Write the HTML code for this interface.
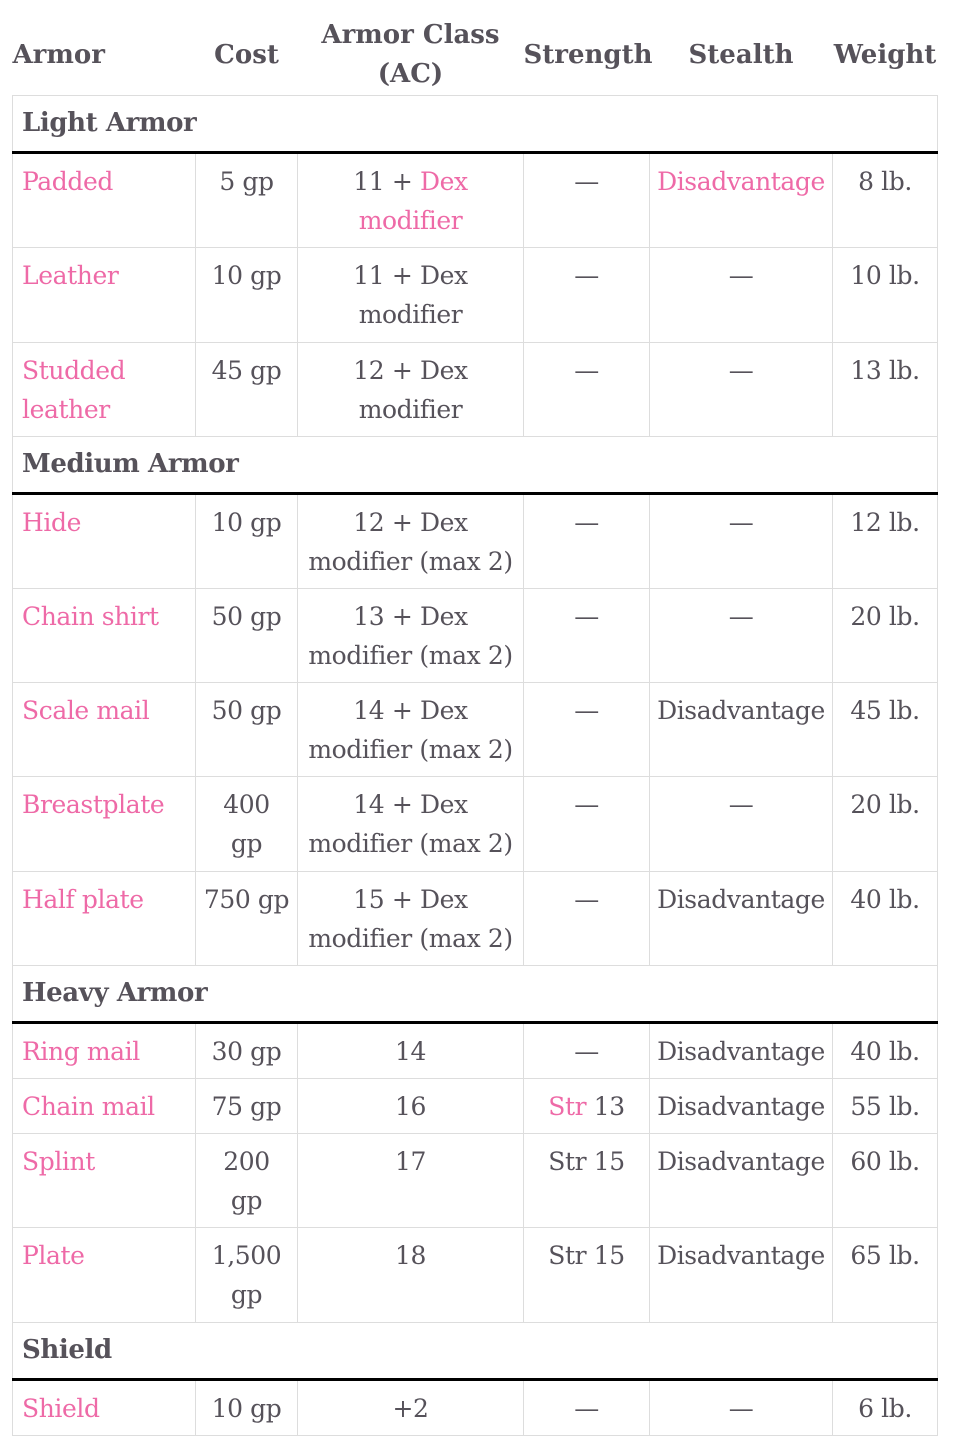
<!DOCTYPE html>
<html><head><meta charset="utf-8"><style>
body{margin:0;background:#fff;width:966px;height:1453px;overflow:hidden}
table{position:absolute;left:12px;top:0;border-collapse:collapse;table-layout:fixed;width:925px;font-family:"DejaVu Serif","Liberation Serif",serif;font-size:25px;color:#56525a;line-height:39px}
td,th{padding:0 4px;vertical-align:top;text-align:center;border:1px solid #ddd;padding-top:8px;box-sizing:border-box;letter-spacing:-0.4px;white-space:nowrap;overflow:visible}
th{border:none;vertical-align:middle;padding:16px 0 0 0;font-weight:bold;font-size:26px;letter-spacing:0}
td:first-child{text-align:left;padding-left:9px}
th:first-child{text-align:left}
.p{color:#ee6aa7}
.g td{font-weight:bold;text-align:left;font-size:26px;border-bottom:3px solid #000;padding-top:8px}
</style></head><body>
<table>
<colgroup><col style="width:183px"><col style="width:102px"><col style="width:226px"><col style="width:126px"><col style="width:183px"><col style="width:105px"></colgroup>
<tr style="height:95px"><th>Armor</th><th>Cost</th><th>Armor Class<br>(AC)</th><th>Strength</th><th>Stealth</th><th>Weight</th></tr>
<tr class="g" style="height:57px"><td colspan="6">Light Armor</td></tr>
<tr style="height:95px"><td class="p">Padded</td><td>5 gp</td><td>11 + <span class="p">Dex<br>modifier</span></td><td>—</td><td class="p">Disadvantage</td><td>8 lb.</td></tr>
<tr style="height:95px"><td class="p">Leather</td><td>10 gp</td><td>11 + Dex<br>modifier</td><td>—</td><td>—</td><td>10 lb.</td></tr>
<tr style="height:94px"><td class="p">Studded<br>leather</td><td>45 gp</td><td>12 + Dex<br>modifier</td><td>—</td><td>—</td><td>13 lb.</td></tr>
<tr class="g" style="height:57px"><td colspan="6">Medium Armor</td></tr>
<tr style="height:95px"><td class="p">Hide</td><td>10 gp</td><td>12 + Dex<br>modifier (max 2)</td><td>—</td><td>—</td><td>12 lb.</td></tr>
<tr style="height:94px"><td class="p">Chain shirt</td><td>50 gp</td><td>13 + Dex<br>modifier (max 2)</td><td>—</td><td>—</td><td>20 lb.</td></tr>
<tr style="height:94px"><td class="p">Scale mail</td><td>50 gp</td><td>14 + Dex<br>modifier (max 2)</td><td>—</td><td>Disadvantage</td><td>45 lb.</td></tr>
<tr style="height:95px"><td class="p">Breastplate</td><td>400<br>gp</td><td>14 + Dex<br>modifier (max 2)</td><td>—</td><td>—</td><td>20 lb.</td></tr>
<tr style="height:94px"><td class="p">Half plate</td><td>750 gp</td><td>15 + Dex<br>modifier (max 2)</td><td>—</td><td>Disadvantage</td><td>40 lb.</td></tr>
<tr class="g" style="height:57px"><td colspan="6">Heavy Armor</td></tr>
<tr style="height:56px"><td class="p">Ring mail</td><td>30 gp</td><td>14</td><td>—</td><td>Disadvantage</td><td>40 lb.</td></tr>
<tr style="height:55px"><td class="p">Chain mail</td><td>75 gp</td><td>16</td><td><span class="p">Str</span> 13</td><td>Disadvantage</td><td>55 lb.</td></tr>
<tr style="height:94px"><td class="p">Splint</td><td>200<br>gp</td><td>17</td><td>Str 15</td><td>Disadvantage</td><td>60 lb.</td></tr>
<tr style="height:95px"><td class="p">Plate</td><td>1,500<br>gp</td><td>18</td><td>Str 15</td><td>Disadvantage</td><td>65 lb.</td></tr>
<tr class="g" style="height:57px"><td colspan="6">Shield</td></tr>
<tr style="height:56px"><td class="p">Shield</td><td>10 gp</td><td>+2</td><td>—</td><td>—</td><td>6 lb.</td></tr>
</table>
</body></html>
